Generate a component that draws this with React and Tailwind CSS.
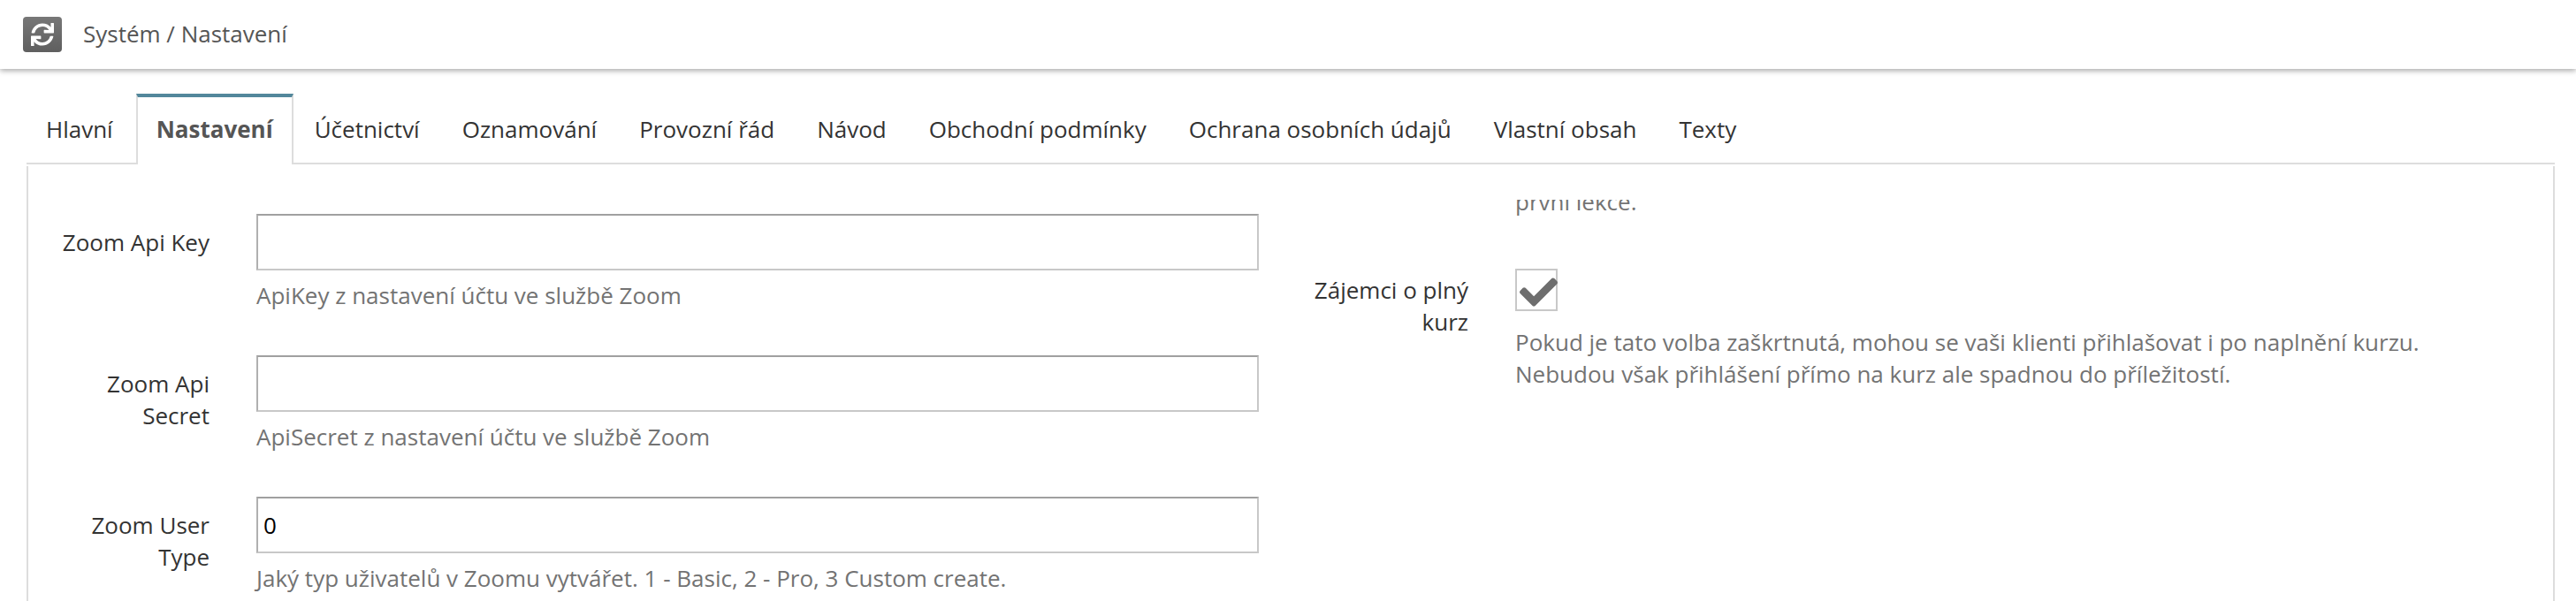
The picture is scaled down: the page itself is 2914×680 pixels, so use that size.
import React from "react";
import { FaSync, FaCheck } from "react-icons/fa";

const tabs = ["Hlavní", "Nastavení", "Účetnictví", "Oznamování", "Provozní řád", "Návod", "Obchodní podmínky", "Ochrana osobních údajů", "Vlastní obsah", "Texty"];

const fields = [
  { label: "Zoom Api Key", hint: "ApiKey z nastavení účtu ve službě Zoom", value: "" },
  { label: "Zoom Api Secret", hint: "ApiSecret z nastavení účtu ve službě Zoom", value: "" },
  { label: "Zoom User Type", hint: "Jaký typ uživatelů v Zoomu vytvářet. 1 - Basic, 2 - Pro, 3 Custom create.", value: "0" },
];

export default function App() {
  return (
    <div className="h-[680px] w-[2914px] overflow-hidden bg-white font-['Open_Sans',sans-serif] text-[26px] leading-[36px] text-[#333]">
      {/* Top bar */}
      <div className="flex h-[78px] items-center gap-[24px] bg-white pl-[26px] shadow-[0_2px_6px_rgba(0,0,0,0.35)]">
        <div className="flex h-[40px] w-[44px] items-center justify-center rounded-[4px] bg-gradient-to-b from-[#777] to-[#5f5f5f] text-white">
          <FaSync className="h-[26px] w-[26px]" />
        </div>
        <span className="-mt-[3px] text-[#555]">Systém / Nastavení</span>
      </div>

      {/* Tabs */}
      <div className="ml-[30px] mr-[24px] mt-[28px] flex h-[80px] border-b-2 border-[#ddd]">
        {tabs.map((t, i) =>
          t === "Nastavení" ? (
            <div key={t} className="-mb-[2px] h-[80px] border-x-2 border-t-4 border-x-[#ddd] border-t-[#53879b] bg-white px-[21px] pt-[18px] font-bold text-[#555]">
              {t}
            </div>
          ) : (
            <div key={t} className={i === 0 ? "pl-[22px] pr-[26px] pt-[22px]" : "px-[24px] pt-[22px]"}>{t}</div>
          )
        )}
      </div>

      {/* Panel */}
      <div className="ml-[30px] mr-[24px] mt-[2px] flex h-[494px] border-x-2 border-[#ddd] pt-[38px]">
        <div className="flex w-[1432px] flex-col gap-[50px] pl-[30px] pt-[16px]">
          {fields.map((f) => (
            <div key={f.label} className="flex gap-[53px]">
              <label className="w-[175px] pt-[14px] text-right">{f.label}</label>
              <div className="w-[1134px]">
                <input
                  readOnly
                  value={f.value}
                  className="h-[64px] w-full border-2 border-[#c8c8c8] border-t-[#a0a0a0] border-l-[#b0b0b0] px-[6px] text-black outline-none"
                />
                <div className="mt-[10px] text-[#737373]">{f.hint}</div>
              </div>
            </div>
          ))}
        </div>

        <div className="h-full flex-1 overflow-hidden pl-[22px]">
          <div className="-mt-[16px] ml-[228px] text-[#737373]">první lekce.</div>
          <div className="mt-[58px] flex gap-[53px]">
            <label className="w-[175px] pt-[6px] text-right">Zájemci o plný kurz</label>
            <div className="w-[1090px]">
              <div className="relative h-[48px] w-[48px] border-2 border-[#c8c8c8]">
                <FaCheck className="absolute left-[3px] top-[3px] h-[43px] w-[43px] text-[#6e6e6e]" />
              </div>
              <div className="mt-[17px] text-[#737373]">
                Pokud je tato volba zaškrtnutá, mohou se vaši klienti přihlašovat i po naplnění kurzu. Nebudou však přihlášení přímo na kurz ale spadnou do příležitostí.
              </div>
            </div>
          </div>
        </div>
      </div>
    </div>
  );
}
